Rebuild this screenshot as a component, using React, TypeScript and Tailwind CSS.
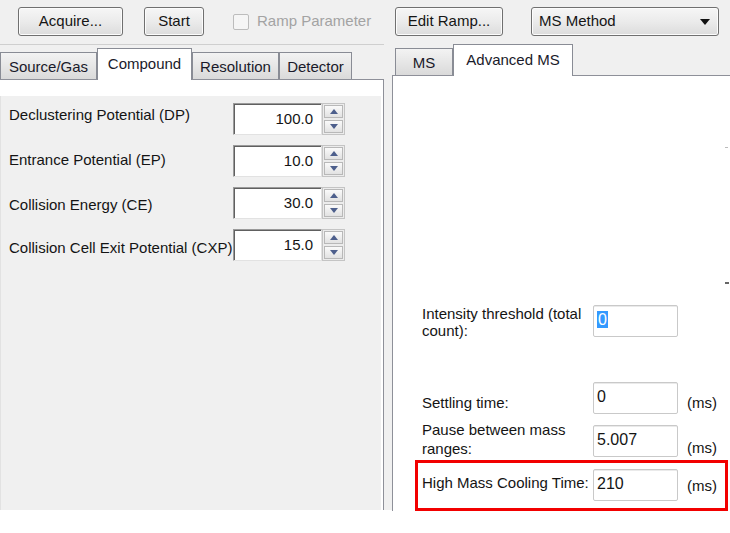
import React from 'react';

const btn =
  'flex h-[29px] items-center justify-center rounded-[3px] border border-[#707070] bg-gradient-to-b from-[#f6f6f6] via-[#ebebeb] to-[#dcdcdc] shadow-[inset_0_0_0_1px_#fcfcfc] text-[15px] text-[#151515]';

function Tab({ label, w, active }: { label: string; w: string; active?: boolean }) {
  if (active) {
    return (
      <div
        className={`${w} relative z-10 -mb-px flex h-[32px] items-start justify-center border border-b-0 border-[#898c95] bg-white pt-[4px] text-[15px] text-[#1a1a2a]`}
      >
        {label}
      </div>
    );
  }
  return (
    <div
      className={`${w} flex h-[27px] items-start justify-center border border-b-0 border-[#898c95] bg-gradient-to-b from-[#f3f3f3] to-[#dadada] pt-[3px] text-[15px] text-[#1a1a2a]`}
    >
      {label}
    </div>
  );
}

function SpinRow({ label, value, lt }: { label: string; value: string; lt: string }) {
  return (
    <div className="flex h-[32px] items-start">
      <div className={`w-[232px] pl-[8px] leading-[17px] whitespace-nowrap ${lt}`}>{label}</div>
      {/* Input */}
      <div className="flex h-[32px] w-[89px] items-center justify-end border border-t-[#9a9a9a] border-l-[#9a9a9a] border-r-[#e2e2e2] border-b-[#e2e2e2] bg-white pr-[8px] text-[15px] shadow-[inset_1px_1px_0_#606060]">
        {value}
      </div>
      {/* Spinner */}
      <div className="flex h-[32px] w-[23px] flex-col gap-[2px] border border-[#c4c4c4] bg-[#ececec] p-[1px]">
        <div className="flex flex-1 items-center justify-center border border-[#b8b8b8] bg-gradient-to-b from-[#fafafa] to-[#e2e2e2]">
          <svg width="8" height="5" viewBox="0 0 8 5">
            <path d="M0 5 L4 0 L8 5 Z" fill="#4d5f8c" />
          </svg>
        </div>
        <div className="flex flex-1 items-center justify-center border border-[#b8b8b8] bg-gradient-to-b from-[#fafafa] to-[#e2e2e2]">
          <svg width="8" height="5" viewBox="0 0 8 5">
            <path d="M0 0 L8 0 L4 5 Z" fill="#4d5f8c" />
          </svg>
        </div>
      </div>
    </div>
  );
}

const field = 'h-[32px] w-[85px] shrink-0 rounded-[2px] border border-[#c9c9c9] bg-white pl-[3px] pt-[4px] text-[16px] leading-[20px] shadow-[inset_0_1px_0_#eaeaea]';

export default function App() {
  return (
    <div className="h-[533px] w-[730px] overflow-hidden bg-white font-['Liberation_Sans',Arial,sans-serif] text-[15px] text-[#141414]">
      {/* Toolbar */}
      <div className="flex h-[44px] items-start bg-[#f0f0f0] pt-[7px]">
        <button className={`${btn} ml-[18px] w-[105px]`}>Acquire...</button>
        <button className={`${btn} ml-[21px] w-[60px]`}>Start</button>
        <div className="ml-[29px] flex h-[29px] w-[162px] items-center">
          <span className="h-[16px] w-[16px] rounded-[2px] border border-[#bcbcbc] bg-[#f5f5f5]" />
          <span className="ml-[8px] text-[#a3a3a3]">Ramp Parameter</span>
        </div>
        <button className={`${btn} w-[108px]`}>Edit Ramp...</button>
        <div className={`${btn} ml-[28px] w-[188px] !justify-between px-[7px]`}>
          <span>MS Method</span>
          <svg width="10" height="6" viewBox="0 0 10 6" className="mr-[1px]">
            <path d="M0 0 L10 0 L5 6 Z" fill="#111" />
          </svg>
        </div>
      </div>

      <div className="flex h-[466px] bg-[#f0f0f0]">
        {/* Left tab control */}
        <div className="flex w-[384px] flex-col border-t border-[#cfcfcf]">
          <div className="flex h-[34px] items-end">
            <Tab label="Source/Gas" w="w-[97px]" />
            <Tab label="Compound" w="w-[95px]" active />
            <Tab label="Resolution" w="w-[87px]" />
            <Tab label="Detector" w="w-[73px]" />
          </div>
          <div className="flex flex-1 flex-col border-t border-r border-[#8e9099] bg-white pt-[16px] pr-[2px]">
            <div className="flex flex-1 flex-col gap-[10px] border-l border-[#e2e2e2] bg-[#f0f0f0] pt-[7px]">
              <SpinRow label="Declustering Potential (DP)" value="100.0" lt="pt-[3px]" />
              <SpinRow label="Entrance Potential (EP)" value="10.0" lt="pt-[6px]" />
              <SpinRow label="Collision Energy (CE)" value="30.0" lt="pt-[9px]" />
              <SpinRow label="Collision Cell Exit Potential (CXP)" value="15.0" lt="pt-[10px]" />
            </div>
          </div>
        </div>

        {/* Right tab control */}
        <div className="ml-[8px] flex flex-1 flex-col">
          <div className="flex h-[31px] items-end pl-[3px]">
            <Tab label="MS" w="w-[58px]" />
            <Tab label="Advanced MS" w="w-[120px]" active />
          </div>
          <div className="relative flex flex-1 flex-col border-t border-l border-[#8e9099] bg-white pl-[29px]">
            <span className="absolute top-[71px] right-[2px] h-[1px] w-[3px] bg-[#bbbbbb]" />
            <span className="absolute top-[206px] right-[1px] h-[2px] w-[4px] bg-[#666666]" />

            {/* Intensity threshold */}
            <div className="mt-[229px] flex items-start">
              <div className="w-[171px] leading-[17px]">
                Intensity threshold (total
                <br />
                count):
              </div>
              <div className={`${field} pt-[3px]`}>
                <span className="bg-[#3399ff] px-[1px] text-white">0</span>
              </div>
            </div>

            {/* Settling time */}
            <div className="mt-[43px] flex items-start">
              <div className="w-[171px] pt-[12px] leading-[17px]">Settling time:</div>
              <div className={field}>0</div>
              <div className="ml-[9px] pt-[12px] leading-[17px]">(ms)</div>
            </div>

            {/* Pause between mass ranges */}
            <div className="mt-[6px] flex items-start">
              <div className="w-[171px] leading-[19px]">
                Pause between mass
                <br />
                ranges:
              </div>
              <div className={`${field} mt-[5px]`}>5.007</div>
              <div className="ml-[9px] pt-[19px] leading-[17px]">(ms)</div>
            </div>

            {/* High Mass Cooling Time (highlighted) */}
            <div className="mt-[2px] -ml-[7px] flex h-[51px] w-[313px] items-start border-[3px] border-[#f20000] pt-[6px] pl-[4px]">
              <div className="w-[171px] pt-[5px] leading-[17px] whitespace-nowrap">High Mass Cooling Time:</div>
              <div className={field}>210</div>
              <div className="ml-[9px] pt-[8px] leading-[17px]">(ms)</div>
            </div>
          </div>
        </div>
      </div>
    </div>
  );
}
